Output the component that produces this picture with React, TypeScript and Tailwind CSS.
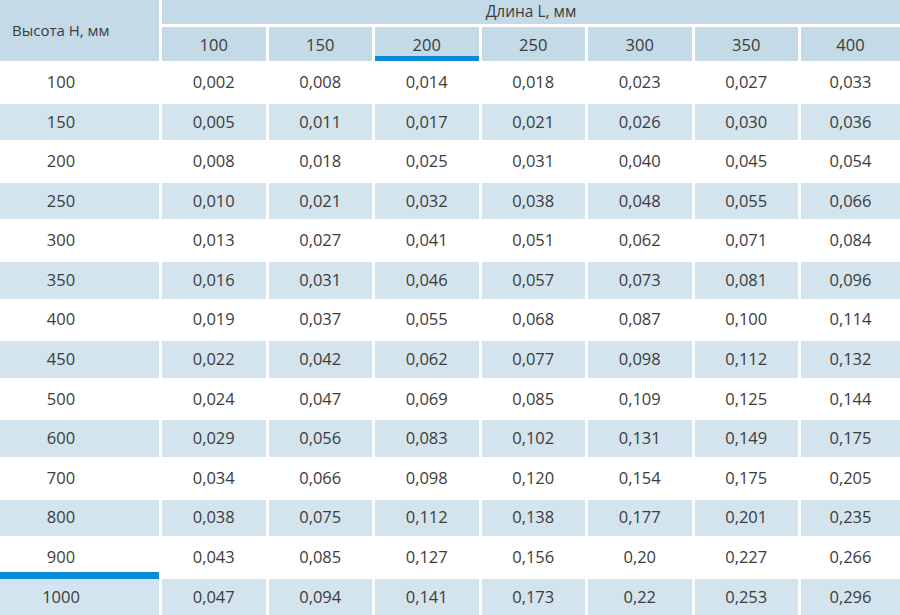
const lengths = ["100", "150", "200", "250", "300", "350", "400"];

const rows: [string, string[]][] = [
  ["100", ["0,002", "0,008", "0,014", "0,018", "0,023", "0,027", "0,033"]],
  ["150", ["0,005", "0,011", "0,017", "0,021", "0,026", "0,030", "0,036"]],
  ["200", ["0,008", "0,018", "0,025", "0,031", "0,040", "0,045", "0,054"]],
  ["250", ["0,010", "0,021", "0,032", "0,038", "0,048", "0,055", "0,066"]],
  ["300", ["0,013", "0,027", "0,041", "0,051", "0,062", "0,071", "0,084"]],
  ["350", ["0,016", "0,031", "0,046", "0,057", "0,073", "0,081", "0,096"]],
  ["400", ["0,019", "0,037", "0,055", "0,068", "0,087", "0,100", "0,114"]],
  ["450", ["0,022", "0,042", "0,062", "0,077", "0,098", "0,112", "0,132"]],
  ["500", ["0,024", "0,047", "0,069", "0,085", "0,109", "0,125", "0,144"]],
  ["600", ["0,029", "0,056", "0,083", "0,102", "0,131", "0,149", "0,175"]],
  ["700", ["0,034", "0,066", "0,098", "0,120", "0,154", "0,175", "0,205"]],
  ["800", ["0,038", "0,075", "0,112", "0,138", "0,177", "0,201", "0,235"]],
  ["900", ["0,043", "0,085", "0,127", "0,156", "0,20", "0,227", "0,266"]],
  ["1000", ["0,047", "0,094", "0,141", "0,173", "0,22", "0,253", "0,296"]],
];

export default function App() {
  return (
    <div className="w-[900px] h-[615px] overflow-hidden bg-white font-['Open_Sans',_'Liberation_Sans',_sans-serif] text-[#3c3c3c]">
      <div className="grid grid-cols-[159px_repeat(6,103.5px)_1fr] grid-rows-[24px_34px_repeat(14,36.6px)] gap-[3px] bg-white">
        {/* header */}
        <div className="row-span-2 bg-[#c4dae6] flex items-center pl-3 text-[15px]">
          Высота Н, мм
        </div>
        <div className="col-span-7 bg-[#c4dae6] flex items-center justify-center text-[15.5px]">
          Длина L, мм
        </div>
        {lengths.map((l) => (
          <div
            key={l}
            className="relative bg-[#c4dae6] flex items-center justify-center text-[16.5px] pt-[3px]"
          >
            {l}
            {l === "200" && (
              <span className="absolute left-0 right-0 bottom-0 h-[5px] bg-[#0b8cdb]" />
            )}
          </div>
        ))}

        {/* data rows */}
        {rows.map(([h, vals], i) => {
          const bg = i % 2 === 1 ? "bg-[#d3e4ee]" : "bg-white";
          return [
            <div
              key={h}
              className={`relative ${bg} flex items-center justify-center pr-[37px] text-[16.5px]`}
            >
              {h}
              {h === "900" && (
                <span className="absolute left-0 right-0 bottom-[-3px] h-[7px] bg-[#0b8cdb]" />
              )}
            </div>,
            ...vals.map((v, j) => (
              <div
                key={h + "-" + j}
                className={`${bg} flex items-center justify-center text-[16.5px]`}
              >
                {v}
              </div>
            )),
          ];
        })}
      </div>
    </div>
  );
}
